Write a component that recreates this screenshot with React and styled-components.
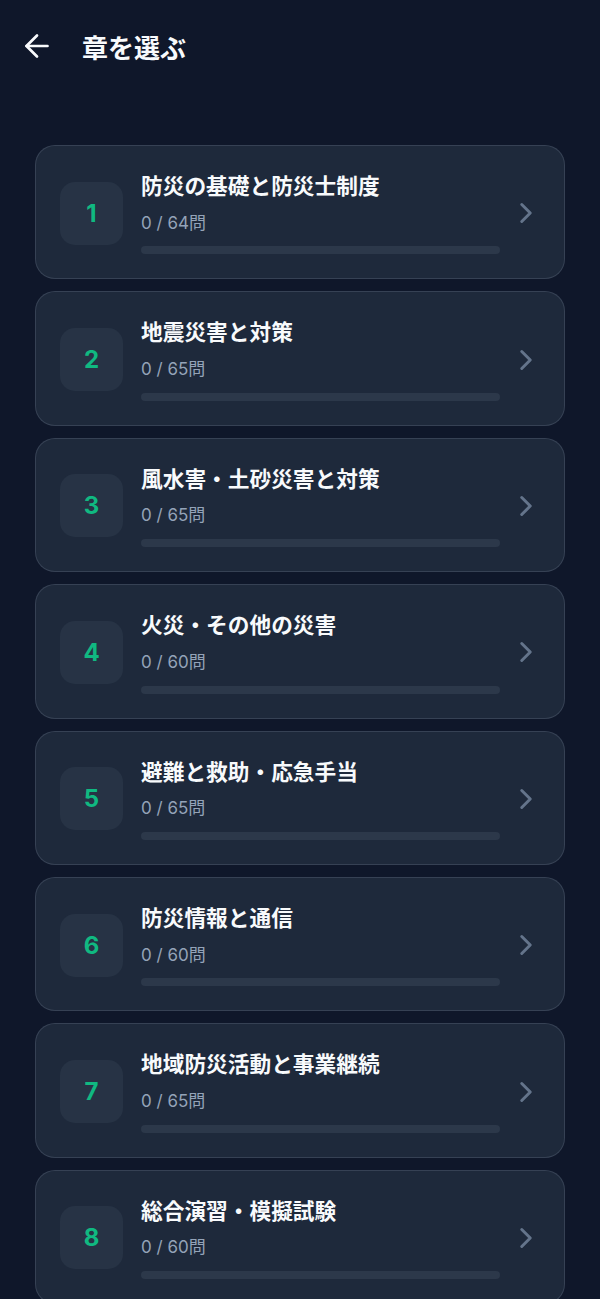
import React from 'react';
import styled, { createGlobalStyle } from 'styled-components';
import { ArrowLeft, ChevronRight } from 'lucide-react';

const chapters = [
  { no: 1, title: '防災の基礎と防災士制度', done: 0, total: 64 },
  { no: 2, title: '地震災害と対策', done: 0, total: 65 },
  { no: 3, title: '風水害・土砂災害と対策', done: 0, total: 65 },
  { no: 4, title: '火災・その他の災害', done: 0, total: 60 },
  { no: 5, title: '避難と救助・応急手当', done: 0, total: 65 },
  { no: 6, title: '防災情報と通信', done: 0, total: 60 },
  { no: 7, title: '地域防災活動と事業継続', done: 0, total: 65 },
  { no: 8, title: '総合演習・模擬試験', done: 0, total: 60 },
];

const GlobalStyle = createGlobalStyle`
  * { box-sizing: border-box; }
  body {
    margin: 0;
    background: #0f172a;
    font-family: Inter, "Noto Sans CJK JP", "Noto Sans", sans-serif;
    color: #f8fafc;
  }
`;

const Page = styled.div`
  min-height: 100vh;
  background: #0f172a;
`;

const Header = styled.header`
  height: 92px;
  display: flex;
  align-items: center;
  padding-left: 19px;
  gap: 27px;
`;

const BackButton = styled.button`
  display: flex;
  align-items: center;
  justify-content: center;
  padding: 0;
  border: none;
  background: none;
  color: #f8fafc;
  cursor: pointer;
`;

const Title = styled.h1`
  margin: 0;
  font-size: 26px;
  font-weight: 700;
  color: #f8fafc;
`;

const List = styled.div`
  display: flex;
  flex-direction: column;
  gap: 12px;
  padding: 53px 35px 0;
`;

const Card = styled.div`
  display: flex;
  align-items: center;
  padding: 26px 21px 24px 24px;
  background: #1e293b;
  border: 1px solid rgba(148, 163, 184, 0.2);
  border-radius: 20px;
  cursor: pointer;
`;

const Badge = styled.div`
  flex: none;
  width: 63px;
  height: 63px;
  border-radius: 15px;
  background: #273345;
  display: flex;
  align-items: center;
  justify-content: center;
  font-size: 24px;
  font-weight: 700;
  color: #10b981;
`;

const Body = styled.div`
  flex: 1;
  min-width: 0;
  margin-left: 18px;
`;

const ChapterTitle = styled.div`
  font-size: 21.7px;
  line-height: 28.6px;
  font-weight: 700;
  color: #f8fafc;
`;

const Count = styled.div`
  margin-top: 10px;
  font-size: 17px;
  line-height: 23.8px;
  color: #94a3b8;
  transform: translateY(1px);
`;

const Track = styled.div`
  margin-top: 12px;
  height: 8px;
  border-radius: 4px;
  background: #2c384a;
  overflow: hidden;
`;

const Fill = styled.div`
  height: 100%;
  background: #10b981;
`;

const Chevron = styled(ChevronRight)`
  flex: none;
  margin-left: 9px;
  color: #64748b;
`;

function ChapterCard({ no, title, done, total }) {
  return (
    <Card>
      <Badge>{no}</Badge>
      <Body>
        <ChapterTitle>{title}</ChapterTitle>
        <Count>
          {done} / {total}問
        </Count>
        <Track>
          <Fill style={{ width: `${(done / total) * 100}%` }} />
        </Track>
      </Body>
      <Chevron size={34} strokeWidth={2.1} />
    </Card>
  );
}

export default function App() {
  return (
    <Page>
      <GlobalStyle />
      <Header>
        <BackButton aria-label="戻る">
          <ArrowLeft size={36} strokeWidth={1.8} />
        </BackButton>
        <Title>章を選ぶ</Title>
      </Header>
      <List>
        {chapters.map((c) => (
          <ChapterCard key={c.no} {...c} />
        ))}
      </List>
    </Page>
  );
}
